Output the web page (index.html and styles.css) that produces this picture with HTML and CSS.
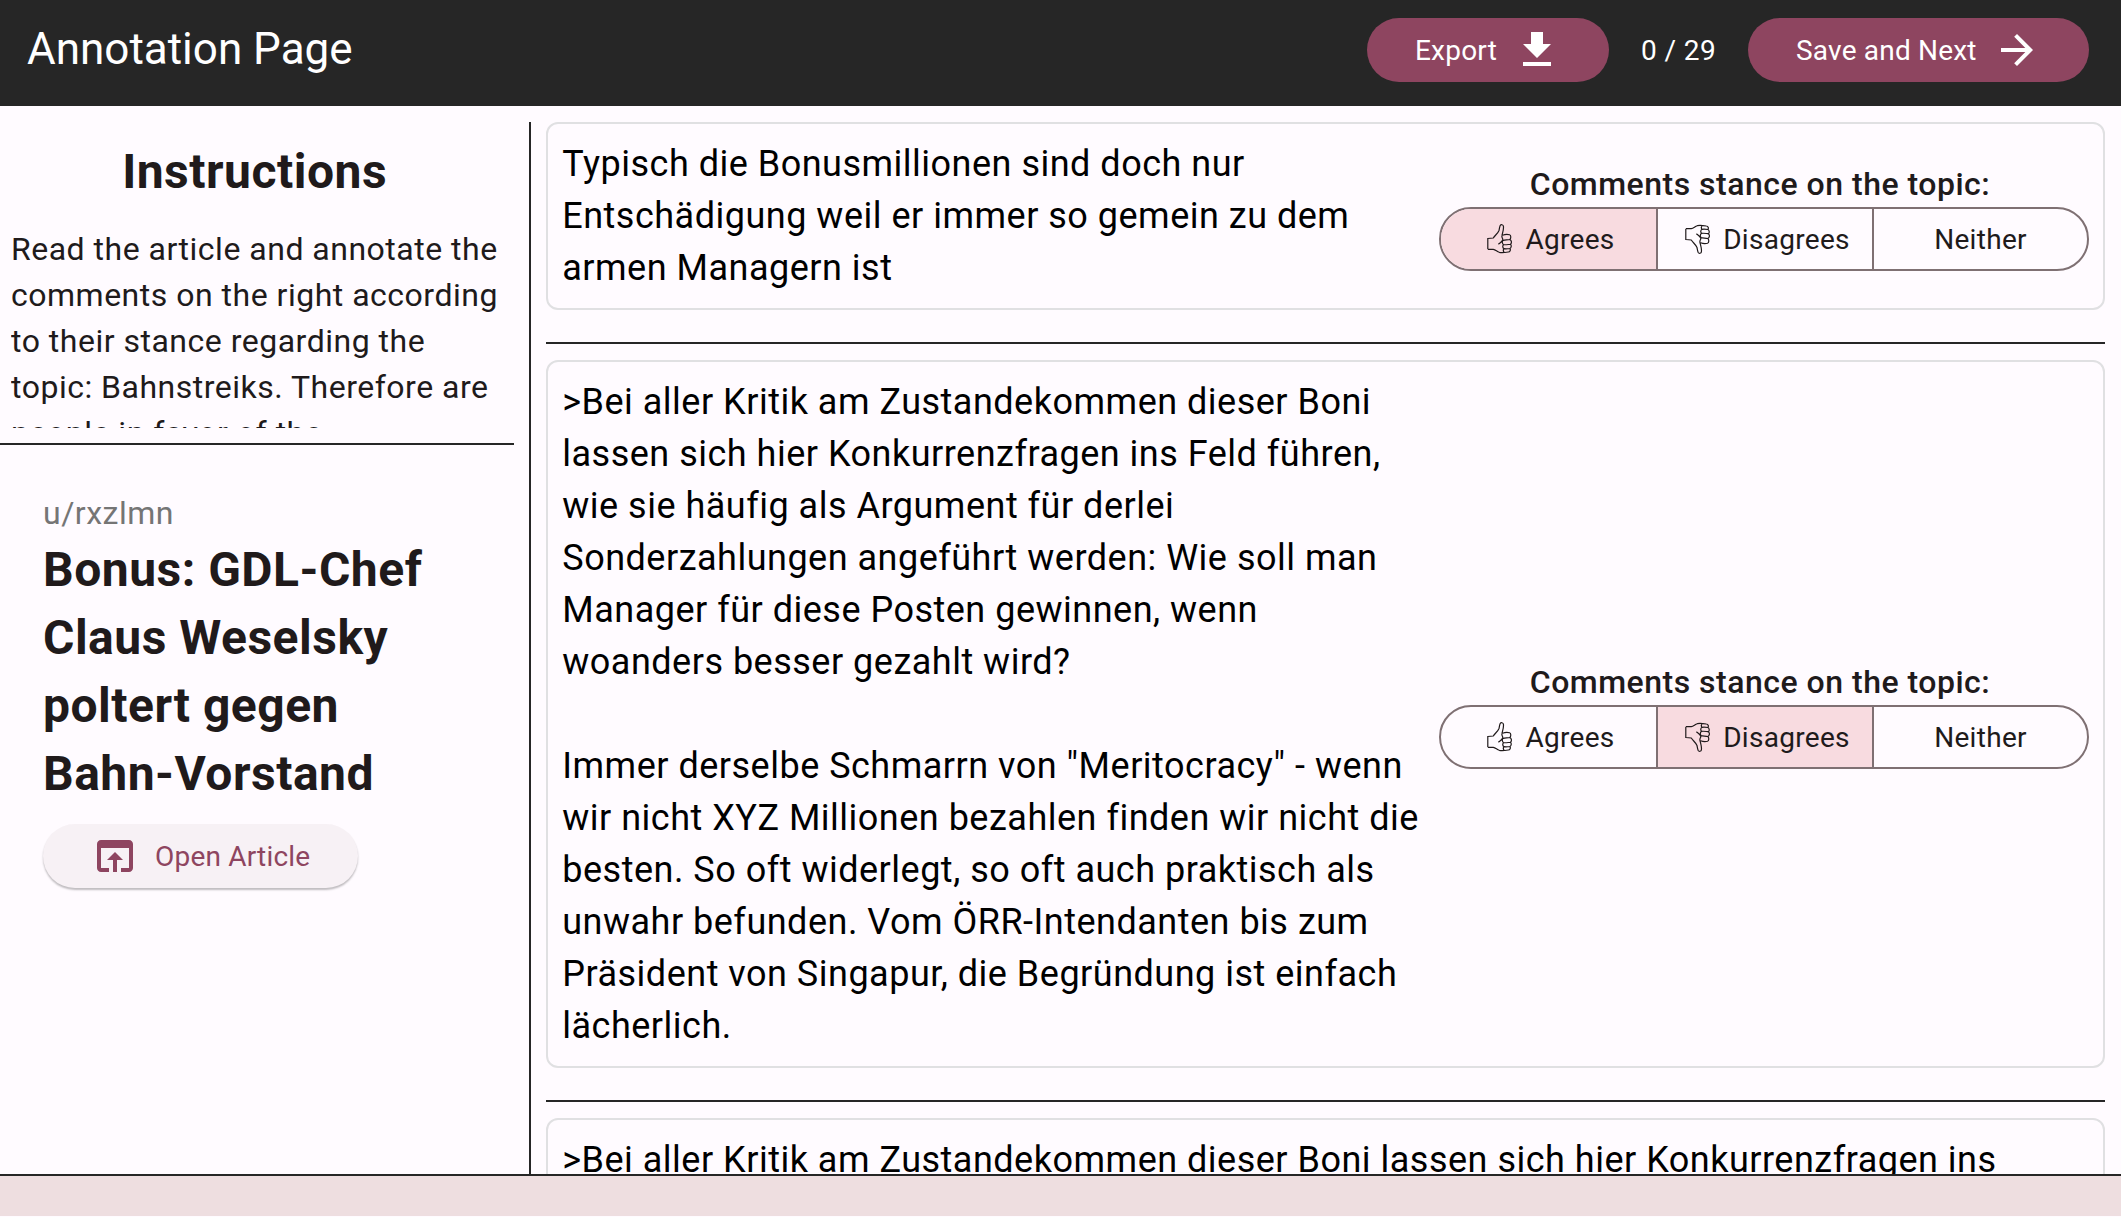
FILE: index.html
```html
<!DOCTYPE html>
<html lang="en">
<head>
<meta charset="utf-8">
<title>Annotation Page</title>
<link rel="stylesheet" href="styles.css">
</head>
<body>
<svg width="0" height="0" class="defs">
  <symbol id="thumb-up" viewBox="0 0 26 30">
    <path d="M.8 14v11M.8 14.500l5.500-.5c1.500-2.500 4.500-4.500 5.700-7.500.4-1.800.5-3.500 1.200-5 .8-1.300 2.900-1 3.200.7.500 3-.7 6-1.400 9.200M15.600 11.200c2.400-.9 5-1 7-.4 1.600.6 1.500 3.600.2 4.700 1.800.8 2.200 3.400.6 4.800 1.300 1 1 3.400-.5 4.200 1 1.400.2 3.300-1.600 3.500-3.500.5-6.500.8-9 .3-2.500-.8-3.800-2.800-6-3H.8M15 11.400c-.6 2 .8 2.500.8 4.300-.8 2.200-2.500 3-4.400 4.600M22.800 15.500c-2.500.5-4.500.3-6.500.8-1.500 1-1.200 3.500.3 4.400 2.300.3 4.400-.2 6.800-.4M16.600 20.700c-1.300 1-1 3.400.4 4 2 .3 4 .1 5.900-.2M17 24.700c-1 1.200-.6 2.800.3 3.700"/>
  </symbol>
</svg>
<header class="topbar">
  <h1 class="topbar-title">Annotation Page</h1>
  <div class="actions">
    <button class="btn export">Export
      <svg class="icon" viewBox="0 0 24 24"><path fill="currentColor" d="M19 9h-4V3H9v6H5l7 7 7-7zM5 18v2h14v-2H5z"/></svg>
    </button>
    <span class="counter">0 / 29</span>
    <button class="btn next">Save and Next
      <svg class="icon" viewBox="0 0 24 24"><path fill="currentColor" d="M12 4l-1.410 1.410L16.170 11H4v2h12.170l-5.580 5.590L12 20l8-8z"/></svg>
    </button>
  </div>
</header>
<main class="content">
  <aside class="side">
    <section class="instructions">
      <h2 class="instructions-title">Instructions</h2>
      <p class="instructions-text">Read the article and annotate the comments on the right according to their stance regarding the topic: Bahnstreiks. Therefore are people in favor of the</p>
    </section>
    <article class="post">
      <div class="author">u/rxzlmn</div>
      <h2 class="post-title">Bonus: GDL-Chef Claus Weselsky poltert gegen Bahn-Vorstand</h2>
      <button class="open">
        <svg class="icon" viewBox="0 0 24 24"><path fill="currentColor" d="M19 4H5c-1.110 0-2 .9-2 2v12c0 1.100.89 2 2 2h4v-2H5V8h14v10h-4v2h4c1.100 0 2-.9 2-2V6c0-1.100-.89-2-2-2zm-7 6l-4 4h3v6h2v-6h3l-4-4z"/></svg>
        Open Article</button>
    </article>
  </aside>
  <div class="rule-v"></div>
  <section class="comments">
    <div class="card">
      <p class="comment">Typisch die Bonusmillionen sind doch nur Entschädigung weil er immer so gemein zu dem armen Managern ist</p>
      <div class="stance">
        <div class="stance-label">Comments stance on the topic:</div>
        <div class="segments">
          <div class="segment selected"><svg class="thumb"><use href="#thumb-up"/></svg>Agrees</div>
          <div class="segment"><svg class="thumb down"><use href="#thumb-up"/></svg>Disagrees</div>
          <div class="segment">Neither</div>
        </div>
      </div>
    </div>
    <hr class="rule">
    <div class="card">
      <p class="comment">&gt;Bei aller Kritik am Zustandekommen dieser Boni lassen sich hier Konkurrenzfragen ins Feld führen, wie sie häufig als Argument für derlei Sonderzahlungen angeführt werden: Wie soll man Manager für diese Posten gewinnen, wenn woanders besser gezahlt wird?

Immer derselbe Schmarrn von "Meritocracy" - wenn wir nicht XYZ Millionen bezahlen finden wir nicht die besten. So oft widerlegt, so oft auch praktisch als unwahr befunden. Vom ÖRR-Intendanten bis zum Präsident von Singapur, die Begründung ist einfach lächerlich.</p>
      <div class="stance">
        <div class="stance-label">Comments stance on the topic:</div>
        <div class="segments">
          <div class="segment"><svg class="thumb"><use href="#thumb-up"/></svg>Agrees</div>
          <div class="segment selected"><svg class="thumb down"><use href="#thumb-up"/></svg>Disagrees</div>
          <div class="segment">Neither</div>
        </div>
      </div>
    </div>
    <hr class="rule">
    <div class="card">
      <p class="comment">&gt;Bei aller Kritik am Zustandekommen dieser Boni lassen sich hier Konkurrenzfragen ins</p>
    </div>
  </section>
</main>
<footer class="footer"></footer>
</body>
</html>
```
FILE: styles.css
```css
* { box-sizing: border-box; }
body {
  margin: 0;
  height: 1216px;
  display: flex;
  flex-direction: column;
  overflow: hidden;
  background: #fffbff;
  color: #201a1b;
  font-family: Roboto, "Liberation Sans", sans-serif;
}
h1, h2, p { margin: 0; }
button { border: 0; font: inherit; }
.defs { position: absolute; }
.topbar {
  flex: none;
  height: 106px;
  padding: 0 32px 6px 27px;
  display: flex;
  align-items: center;
  justify-content: space-between;
  background: #262626;
  color: #fff;
}
.topbar-title { font-size: 44px; font-weight: 400; line-height: 56px; margin-bottom: 2px; }
.actions { display: flex; align-items: center; }
.btn {
  height: 64px;
  display: flex;
  align-items: center;
  justify-content: space-between;
  padding: 0 48px;
  border-radius: 32px;
  background: #8e4560;
  color: #fff;
  font-size: 28px;
  font-weight: 400;
  letter-spacing: 0.2px;
}
.export { width: 242px; padding-right: 48px; }
.next { width: 341px; }
.icon { flex: none; width: 48px; height: 48px; }
.counter { width: 139px; text-align: center; font-size: 28px; font-weight: 400; letter-spacing: 0.4px; }
.content { flex: none; height: 1068px; display: flex; padding-top: 16px; overflow: hidden; }
.side { width: 514.25px; }
.instructions { height: 323px; padding: 17px 0 16px 11px; border-bottom: 2px solid #262626; }
.instructions-title { height: 66px; margin-left: -11px; padding-right: 5px; text-align: center; font-size: 48px; line-height: 66px; letter-spacing: 0.5px; }
.instructions-text { height: 202px; margin-top: 21px; overflow: hidden; font-size: 32px; line-height: 46px; letter-spacing: 0.5px; }
.post { padding: 45px 48px 0 43px; }
.author { font-size: 32px; line-height: 46px; letter-spacing: 0.5px; color: #757575; }
.post-title { font-size: 48px; line-height: 68px; letter-spacing: 0.5px; }
.open {
  width: 315px;
  height: 64px;
  margin-top: 16px;
  display: flex;
  align-items: center;
  gap: 16px;
  padding: 0 40px 0 48px;
  border-radius: 32px;
  background: #f7f1f5;
  color: #8e4560;
  font-size: 28px;
  letter-spacing: 0.2px;
  white-space: nowrap;
  box-shadow: 0 2px 2px rgba(0, 0, 0, 0.25);
}
.rule-v { width: 2px; margin: 0 15px; background: #262626; }
.comments { width: 1558.75px; }
.card {
  display: flex;
  align-items: center;
  justify-content: space-between;
  padding: 14px;
  border: 2px solid #e0e0e2;
  border-radius: 12px;
}
.comment { max-width: 860px; font-size: 36px; line-height: 52px; letter-spacing: 0.5px; white-space: pre-line; color: #000; }
.card:last-child .comment { max-width: none; }
.rule { height: 2px; margin: 32px 0 16px; border: 0; background: #262626; }
.stance { width: 650px; }
.stance-label { line-height: 46px; text-align: center; font-size: 32px; font-weight: 500; letter-spacing: 0.5px; padding-right: 8px; }
.segments { display: grid; grid-template-columns: 215px 216px 1fr; height: 64px; border: 2px solid #7f7073; border-radius: 32px; overflow: hidden; }
.segment { display: flex; align-items: center; justify-content: center; gap: 12px; padding-left: 5px; font-size: 28px; letter-spacing: 0.3px; }
.segment:last-child { padding-left: 0; }
.segment + .segment { border-left: 2px solid #7f7073; }
.selected { background: #f8dbe0; }
.thumb { width: 26px; height: 30px; fill: none; stroke: #201a1b; stroke-width: 1.2; stroke-linejoin: round; }
.down { transform: scaleY(-1); }
.footer { flex: 1; border-top: 2px solid #262626; background: #eedee0; }
```
